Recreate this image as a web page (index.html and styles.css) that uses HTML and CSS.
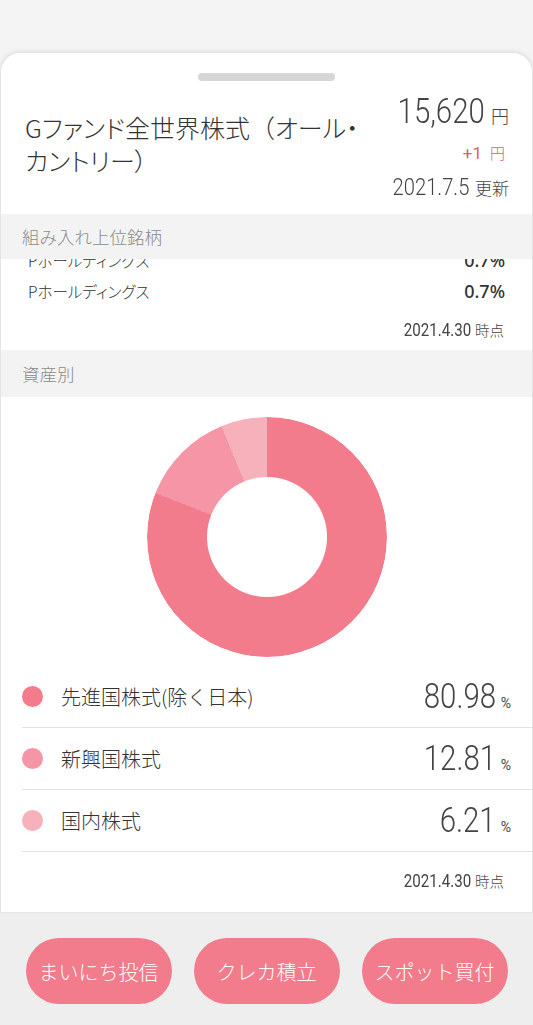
FILE: index.html
```html
<!DOCTYPE html>
<html lang="ja">
<head>
<meta charset="utf-8">
<title>Gファンド全世界株式</title>
<link rel="stylesheet" href="styles.css">
</head>
<body>
<div class="page">
  <main class="sheet">
    <div class="handle"></div>
    <header class="fund">
      <h1 class="fund-name">Gファンド全世界株式<span class="paren">（</span>オール・<br>カントリー）</h1>
      <div class="quote">
        <div class="price"><span class="num price-num">15,620</span><span class="yen">円</span></div>
        <div class="change"><span class="chg-num">+1</span><span class="yen-s">円</span></div>
        <div class="updated"><span class="num upd-num">2021.7.5</span><span class="upd-label">更新</span></div>
      </div>
    </header>

    <section class="block block-1">
      <h2 class="band">組み入れ上位銘柄</h2>
      <div class="holdings">
        <div class="holding holding-prev"><span class="h-name">Pホールディングス</span><span class="h-pct">0.7%</span></div>
        <div class="holding"><span class="h-name">Pホールディングス</span><span class="h-pct">0.7%</span></div>
      </div>
      <div class="asof"><span class="num asof-num">2021.4.30</span><span class="asof-label">時点</span></div>
    </section>

    <section class="block">
      <h2 class="band band-2">資産別</h2>
      <div class="donut"></div>
      <ul class="legend">
        <li class="legend-row"><span class="dot dot-1"></span><span class="l-name">先進国株式(除く日本)</span><span class="l-val"><span class="num l-num">80.98</span><span class="l-unit">%</span></span></li>
        <li class="legend-row"><span class="dot dot-2"></span><span class="l-name">新興国株式</span><span class="l-val"><span class="num l-num">12.81</span><span class="l-unit">%</span></span></li>
        <li class="legend-row"><span class="dot dot-3"></span><span class="l-name">国内株式</span><span class="l-val"><span class="num l-num">6.21</span><span class="l-unit">%</span></span></li>
      </ul>
      <div class="asof asof-2"><span class="num asof-num">2021.4.30</span><span class="asof-label">時点</span></div>
    </section>
  </main>
  <nav class="actions">
    <button class="action">まいにち投信</button>
    <button class="action">クレカ積立</button>
    <button class="action">スポット買付</button>
  </nav>
</div>
</body>
</html>
```
FILE: styles.css
```css
* { box-sizing: border-box; }
html, body { margin: 0; padding: 0; }
body {
  background: #f4f4f4;
  font-family: "Noto Sans CJK JP", "Noto Sans", sans-serif;
  font-weight: 300;
  color: #333;
  width: 533px;
  height: 1025px;
  overflow: hidden;
}
.page {
  padding-top: 52px;
  height: 1025px;
  display: flex;
  flex-direction: column;
}
.sheet {
  background: #fff;
  border: 1px solid #e4e4e4;
  border-bottom: none;
  border-radius: 20px 20px 0 0;
  box-shadow: 0 -1px 4px rgba(0,0,0,0.08);
  padding-bottom: 19px;
}
.handle {
  width: 137px;
  height: 8px;
  border-radius: 4px;
  background: #d6d6d6;
  margin: 20px auto 0;
}
.fund {
  display: flex;
  justify-content: space-between;
  align-items: flex-start;
  padding: 0 23px 0 24px;
  height: 133px;
}
.fund-name {
  margin: 30px 0 0;
  font-size: 25px;
  line-height: 33px;
  font-weight: 300;
  color: #333;
  font-feature-settings: "palt";
  white-space: nowrap;
}
.paren { font-feature-settings: normal; }
.quote {
  display: flex;
  flex-direction: column;
  align-items: flex-end;
  margin-top: 11px;
}
.num {
  display: inline-block;
  font-family: Roboto, "Liberation Sans", sans-serif;
  transform: scaleX(0.84);
  transform-origin: 100% 50%;
}
.price {
  display: flex;
  align-items: baseline;
  height: 40px;
  line-height: 40px;
}
.price-num {
  font-size: 35px;
  font-weight: 300;
  color: #444;
}
.yen {
  font-size: 18px;
  color: #444;
  margin-left: 6px;
}
.change {
  display: flex;
  align-items: baseline;
  margin-top: 9px;
  height: 24px;
  line-height: 24px;
  color: #e25b68;
  padding-right: 4px;
}
.chg-num {
  font-family: Roboto, "Liberation Sans", sans-serif;
  font-weight: 400;
  font-size: 17px;
}
.yen-s {
  font-size: 15px;
  margin-left: 8px;
}
.updated {
  display: flex;
  align-items: baseline;
  margin-top: 8px;
  height: 28px;
  line-height: 28px;
  color: #444;
}
.upd-num {
  font-size: 24px;
  font-weight: 300;
}
.upd-label {
  font-size: 17px;
  margin-left: 6px;
}

.band {
  margin: 0;
  background: #f3f3f3;
  color: #8a8a8a;
  font-size: 17.5px;
  font-weight: 300;
  height: 45px;
  line-height: 45px;
  padding-left: 21px;
}
.band-2 { height: 47px; line-height: 47px; }

.block-1 { padding-bottom: 8px; }
.holdings {
  overflow: hidden;
}
.holding {
  display: flex;
  justify-content: space-between;
  align-items: center;
  height: 31px;
  padding: 0 27px 0 27px;
  font-size: 15.5px;
  color: #333;
}
.holding-prev { margin-top: -15px; }
.h-name { font-feature-settings: "palt"; }
.h-pct {
  font-family: "Noto Sans", sans-serif;
  font-weight: 500;
  font-size: 18px;
  color: #333;
}
.asof {
  display: flex;
  justify-content: flex-end;
  align-items: baseline;
  padding-right: 28px;
  margin-top: 12px;
  height: 24px;
  line-height: 24px;
  color: #444;
}
.asof-num { font-size: 18px; font-weight: 400; }
.asof-label { font-size: 14.5px; margin-left: 4px; }

.donut {
  width: 240px;
  height: 240px;
  margin: 20px auto 0;
  border-radius: 50%;
  background: conic-gradient(#f27b8c 0 80.98%, #f595a6 0 93.79%, #f7b1bb 0 100%);
  -webkit-mask: radial-gradient(circle, transparent 59.5px, #000 60.5px);
  mask: radial-gradient(circle, transparent 59.5px, #000 60.5px);
}
.legend {
  list-style: none;
  margin: 9px 0 0;
  padding: 0 0 0 21px;
}
.legend-row {
  display: flex;
  align-items: center;
  height: 62px;
  border-bottom: 1px solid #e3e3e3;
  padding-right: 21px;
}
.dot {
  width: 21px;
  height: 21px;
  border-radius: 50%;
  flex: none;
}
.dot-1 { background: #f27b8c; }
.dot-2 { background: #f595a6; }
.dot-3 { background: #f7b1bb; }
.l-name {
  margin-left: 18px;
  font-size: 20px;
  color: #333;
  flex: 1;
}
.l-val {
  display: flex;
  align-items: baseline;
  color: #444;
}
.l-num {
  font-size: 35px;
  font-weight: 300;
}
.l-unit {
  font-family: Roboto, sans-serif;
  font-weight: 400;
  font-size: 14px;
  margin-left: 5px;
}
.asof-2 { margin-top: 17px; }

.actions {
  flex: 1;
  background: #eeeeee;
  border-top: 1px solid #e6e6e6;
  display: flex;
  justify-content: center;
  align-items: flex-start;
  gap: 22px;
  padding-top: 25px;
}
.action {
  width: 146px;
  height: 66px;
  border: none;
  border-radius: 33px;
  background: #f27b8c;
  color: #fff;
  font-family: "Noto Sans CJK JP", sans-serif;
  font-weight: 300;
  font-size: 20px;
  padding: 0;
}
```
